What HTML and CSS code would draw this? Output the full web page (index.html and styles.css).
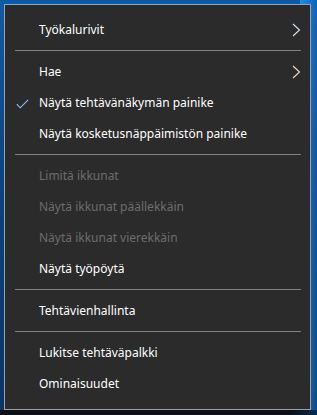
FILE: index.html
```html
<!DOCTYPE html>
<html lang="fi">
<head>
  <meta charset="UTF-8">
  <meta name="viewport" content="width=device-width, initial-scale=1">
  <title>Tehtäväpalkin valikko</title>
  <link rel="stylesheet" href="styles.css">
</head>
<body>

  <div class="desktop">
    <ul class="menu">
      <li class="item">
        <span class="label">Työkalurivit</span>
        <svg class="chevron" width="9" height="14" viewBox="0 0 9 14"><path d="M1 1 L7.5 7 L1 13" fill="none" stroke="#d6e4f5" stroke-width="1.1"/></svg>
      </li>
      <li class="sep"></li>
      <li class="item">
        <span class="label">Hae</span>
        <svg class="chevron" width="9" height="14" viewBox="0 0 9 14"><path d="M1 1 L7.5 7 L1 13" fill="none" stroke="#f0dccb" stroke-width="1.1"/></svg>
      </li>
      <li class="item">
        <svg class="check" width="13" height="10" viewBox="0 0 13 10"><path d="M0.8 5.2 L4.2 8.8 L12.2 0.8" fill="none" stroke="#8cc2f5" stroke-width="1.1"/></svg>
        <span class="label">Näytä tehtävänäkymän painike</span>
      </li>
      <li class="item"><span class="label">Näytä kosketusnäppäimistön painike</span></li>
      <li class="sep"></li>
      <li class="item disabled"><span class="label">Limitä ikkunat</span></li>
      <li class="item disabled"><span class="label">Näytä ikkunat päällekkäin</span></li>
      <li class="item disabled"><span class="label">Näytä ikkunat vierekkäin</span></li>
      <li class="item"><span class="label">Näytä työpöytä</span></li>
      <li class="sep"></li>
      <li class="item"><span class="label">Tehtävienhallinta</span></li>
      <li class="sep"></li>
      <li class="item"><span class="label">Lukitse tehtäväpalkki</span></li>
      <li class="item"><span class="label">Ominaisuudet</span></li>
    </ul>
    <div class="taskbar"></div>
  </div>

</body>
</html>
```

FILE: styles.css
```css
* {
  box-sizing: border-box;
}

body {
  margin: 0;
  padding: 0;
  font-family: 'Noto Sans', 'Open Sans', sans-serif;
}

.desktop {
  width: 317px;
  height: 415px;
  display: flex;
  flex-direction: column;
  overflow: hidden;
  background:
    linear-gradient(90deg, rgba(0,0,0,0) 0, rgba(0,0,0,0) 300px, rgba(60,170,255,0.6) 300px, rgba(20,120,220,0.3) 317px),
    linear-gradient(180deg, #0f5aa8 0%, #0b4282 45%, #0a3466 100%);
}

.menu {
  list-style: none;
  margin: 4px 6px 0 4px;
  padding: 9px 0 9px;
  height: 406px;
  background: #2b2b2b;
  border: 1px solid #a0a0a0;
  color: #fff;
  font-size: 12px;
}

.item {
  position: relative;
  height: 31px;
  display: flex;
  align-items: center;
  padding-left: 34px;
}

.item.disabled {
  color: #6d6d6d;
}

.check {
  position: absolute;
  left: 11px;
  top: 12px;
}

.chevron {
  position: absolute;
  right: 9px;
  top: 9px;
}

.sep {
  height: 11px;
  display: flex;
  align-items: center;
  padding: 0 9px 0 10px;
}

.sep::before {
  content: "";
  flex: 1;
  height: 1px;
  background: #808080;
}

.taskbar {
  flex: 1;
  background: linear-gradient(90deg, #0b0f16 0, #0b0f16 290px, #0a2a4c 317px);
}
```
